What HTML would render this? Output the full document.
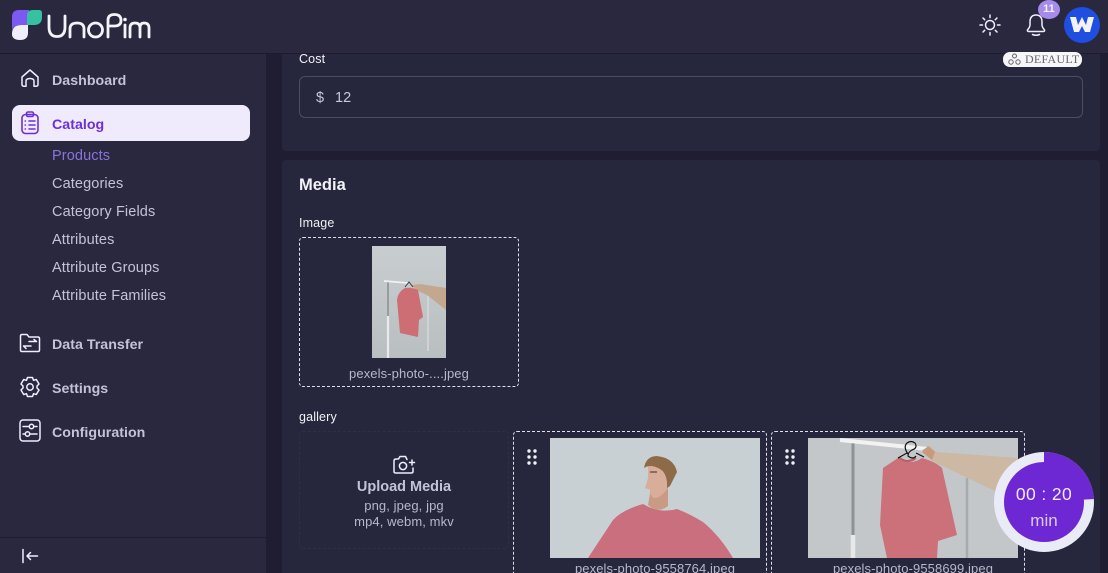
<!DOCTYPE html>
<html><head><meta charset="utf-8"><style>
html,body{margin:0;padding:0;width:1108px;height:573px;overflow:hidden;background:#1e1d32;font-family:"Liberation Sans",sans-serif}
#w{position:relative;width:1108px;height:573px;overflow:hidden;background:#1e1d32}
.a{position:absolute;white-space:nowrap}
.nav{left:52px;font-size:14.2px;font-weight:700;color:#c3c3d8;line-height:20px;letter-spacing:.03px}
.sub{left:52px;font-size:14.5px;color:#c3c3d8;line-height:20px;letter-spacing:.12px}
.lbl{font-size:12.5px;color:#f0f0f5;line-height:16px;letter-spacing:.15px}
.cap{font-size:13px;color:#b8b8cc;text-align:center;line-height:16px;letter-spacing:.1px}
svg{position:absolute;display:block}
.ic{fill:none;stroke:#eef;stroke-width:1.5;stroke-linecap:round;stroke-linejoin:round}
.dash{position:absolute;box-sizing:border-box;border:1px dashed #dfe0ea;border-radius:4px}
</style></head><body><div id="w">
<div class="a" style="left:0;top:54px;width:266px;height:519px;background:#29283f"></div>
<div class="a" style="left:282px;top:44px;width:818px;height:107px;background:#26273c;border-radius:4px"></div>
<div class="a" style="left:282px;top:160px;width:818px;height:413px;background:#26273c;border-radius:4px 4px 0 0"></div>
<div class="a" style="left:0;top:0;width:1108px;height:53px;background:#29283f;border-bottom:1px solid #1c1c2e"></div>

<svg style="left:12px;top:10px" width="30" height="30" viewBox="0 0 30 30"><path d="M0 24Q0 15 9 15H16V23Q16 30 8 30Q0 30 0 24Z" fill="#f1eefc"/><path d="M0 14V7Q0 0 7 0H17V15H9Q2 15 0 20Z" fill="#7a5af0"/><path d="M15 6Q15 0 21 0H27Q30 0 30 3V7Q30 15 22 15H15Z" fill="#36c2a2"/></svg>
<svg style="left:46px;top:12px" width="106" height="28" viewBox="0 0 106 28"><g fill="none" stroke="#f3f3f8" stroke-width="2.800" stroke-linecap="round"><path d="M3 4V15Q3 24.500 11 24.500Q19 24.500 19 15V4"/><path d="M24 25V17Q24 11 31 11Q38 11 38 17V25"/><circle cx="49.500" cy="18" r="7"/><path d="M62 25V8Q62 2.500 68.500 2.500Q75 2.500 75 8.500Q75 14 68.500 14H64"/><path d="M79 13V25"/><path d="M84 25V16Q84 11 89 11Q94 11 94 16V25M94 16Q94 11 98 11Q103 11 103 16V25"/></g><circle cx="79" cy="7.500" r="1.800" fill="#f3f3f8"/></svg>

<svg style="left:979px;top:14px" width="22" height="22" viewBox="0 0 22 22"><g class="ic"><circle cx="11" cy="11" r="4.500"/><path d="M11 1V3.500M11 18.500V21M1 11H3.500M18.500 11H21M4 4L5.700 5.700M16.300 16.300L18 18M4 18L5.700 16.300M16.300 5.700L18 4"/></g></svg>
<svg style="left:1024px;top:12px" width="24" height="26" viewBox="0 0 24 26"><g class="ic"><path d="M12 3Q6 3 6 10V13Q6 15 3.500 18Q3 19.500 5 19.500H19Q21 19.500 20.500 18Q18 15 18 13V10Q18 3 12 3Z"/><path d="M8.500 22.500Q12 24 15.500 22.500"/></g></svg>
<div class="a" style="left:1038px;top:0;width:22px;height:19px;border-radius:50%;background:#a78be8;color:#f3effc;font-size:11px;font-weight:700;text-align:center;line-height:18px">11</div>
<div class="a" style="left:1064px;top:7px;width:36px;height:36px;border-radius:50%;background:#1f4fe0"></div>
<svg style="left:1070px;top:17px" width="24" height="15" viewBox="0 0 24 15"><path d="M0 0H6L8 8L12 0L16 8L18 0H24L20 15H15L12 9L9 15H4Z" fill="#f2f2fa"/></svg>

<svg style="left:21px;top:69px" width="18" height="18" viewBox="0 0 18 18"><path class="ic" d="M1 8L9 1L17 8V15.500Q17 17.200 15 17.200H13V12Q13 9.500 9 9.500Q5 9.500 5 12V17.200H3Q1 17.200 1 15.500Z"/></svg>
<div class="a nav" style="top:71px">Dashboard</div>
<div class="a" style="left:12px;top:105px;width:238px;height:36px;border-radius:8px;background:#efeafc"></div>
<svg style="left:20px;top:111px" width="20" height="24" viewBox="0 0 20 24"><g fill="none" stroke="#6d2fd6" stroke-width="1.600" stroke-linecap="round" stroke-linejoin="round"><rect x="2" y="3.500" width="16" height="19" rx="3.500"/><rect x="6.500" y="1" width="7" height="4.500" rx="1.500"/><path d="M9 10H15M9 14H15M9 18H15M5.200 10H5.400M5.200 14H5.400M5.200 18H5.400"/></g></svg>
<div class="a nav" style="top:115px;color:#6d2fd6">Catalog</div>
<div class="a sub" style="top:146px;color:#8b73dc">Products</div>
<div class="a sub" style="top:174px">Categories</div>
<div class="a sub" style="top:202px">Category Fields</div>
<div class="a sub" style="top:230px">Attributes</div>
<div class="a sub" style="top:258px">Attribute Groups</div>
<div class="a sub" style="top:286px">Attribute Families</div>
<svg style="left:19px;top:333px" width="22" height="20" viewBox="0 0 22 20"><g class="ic"><path d="M1.500 3Q1.500 1.500 3 1.500H8L10 4H19Q20.500 4 20.500 5.500V17Q20.500 18.500 19 18.500H3Q1.500 18.500 1.500 17Z"/><path d="M10 8.500H17.500L15 6.500M12 13H4.500L7 15.500"/></g></svg>
<div class="a nav" style="top:335px">Data Transfer</div>
<svg style="left:19px;top:376px" width="22" height="22" viewBox="0 0 22 22"><g class="ic"><circle cx="11" cy="11" r="3.200"/><path d="M8.500 1.500H13.500L14.500 4.300L17.300 3.500L20 8L18 10V12L20 14L17.300 18.500L14.500 17.700L13.500 20.500H8.500L7.500 17.700L4.700 18.500L2 14L4 12V10L2 8L4.700 3.500L7.500 4.300Z"/></g></svg>
<div class="a nav" style="top:379px">Settings</div>
<svg style="left:19px;top:419px" width="22" height="23" viewBox="0 0 22 23"><g class="ic"><rect x="1" y="1" width="20" height="21" rx="3"/><path d="M4 7.500H10M15 7.500H18M4 15H6M11 15H18"/><circle cx="12.500" cy="7.500" r="2.200"/><circle cx="8.500" cy="15" r="2.200"/></g></svg>
<div class="a nav" style="top:423px">Configuration</div>
<div class="a" style="left:0;top:537px;width:266px;height:1px;background:#1d1d30"></div>
<svg style="left:21px;top:547px" width="18" height="18" viewBox="0 0 18 18"><path class="ic" d="M2 2.500V15.500M16.500 9H6M9.500 5.500L6 9L9.500 12.500"/></svg>

<div class="a lbl" style="left:299px;top:51px">Cost</div>
<div class="a" style="left:1003px;top:52px;width:79px;height:15px;background:#f6f6fa;border-radius:7px"></div>
<svg style="left:1008px;top:53px" width="13" height="13" viewBox="0 0 13 13"><g fill="none" stroke="#666" stroke-width="1"><circle cx="6.500" cy="3" r="2"/><circle cx="3" cy="9" r="2.200"/><circle cx="10" cy="9" r="2.200"/></g></svg>
<div class="a" style="left:1025px;top:52px;font:12px/15px 'Liberation Serif',serif;color:#666;letter-spacing:.25px">DEFAULT</div>
<div class="a" style="left:299px;top:76px;width:784px;height:42px;box-sizing:border-box;border:1px solid #4c4d63;border-radius:6px"></div>
<div class="a" style="left:316px;top:89px;font-size:14.500px;line-height:18px;color:#c8c8da">$</div>
<div class="a" style="left:335px;top:89px;font-size:14.500px;line-height:18px;color:#c8c8da">12</div>

<div class="a" style="left:299px;top:176px;font-size:16.500px;font-weight:700;color:#f2f2f7;line-height:19px">Media</div>
<div class="a lbl" style="left:299px;top:215px">Image</div>
<div class="dash" style="left:299px;top:237px;width:220px;height:150px"></div>
<svg style="left:372px;top:246px" width="74" height="112" viewBox="0 0 74 112"><defs><linearGradient id="g1" x1="0" y1="0" x2="0" y2="1"><stop offset="0" stop-color="#c8cdd0"/><stop offset="1" stop-color="#b9bfc1"/></linearGradient></defs><rect width="74" height="112" fill="url(#g1)"/><path d="M16 35V72" stroke="#9a9c9e" stroke-width="2"/><path d="M16 70V112" stroke="#e9e9e9" stroke-width="2.200"/><path d="M56 50V105" stroke="#d6d8da" stroke-width="1.500"/><path d="M12 35L36 37" stroke="#f1f1f1" stroke-width="1.800"/><path d="M40 39L48 38L74 42V64L55 49L44 44Z" fill="#c3a88f"/><path d="M33 42Q26 46 25 54L28 87L46 91L47 74L51 71L46 44Q40 41 33 42Z" fill="#cc6e73"/><path d="M33 41L37 36L41 41" fill="none" stroke="#333" stroke-width=".9"/></svg>
<div class="a cap" style="left:299px;top:366px;width:220px">pexels-photo-....jpeg</div>

<div class="a lbl" style="left:299px;top:409px">gallery</div>
<div class="a" style="left:299px;top:431px;width:210px;height:118px;box-sizing:border-box;border:1px dashed #2e2f46;border-radius:4px"></div>
<svg style="left:393px;top:455px" width="24" height="20" viewBox="0 0 24 20"><g class="ic" stroke-width="1.300"><path d="M14 4.500L12.500 1.500H7L5.500 4H3Q1 4 1 6V16.500Q1 18 3 18H18Q20 18 20 16.500V13"/><circle cx="10" cy="11" r="3.600"/><path d="M19 5V10M16.500 7.500H21.500"/></g></svg>
<div class="a" style="left:299px;top:478px;width:210px;text-align:center;font-size:14.500px;font-weight:700;line-height:18px;color:#c3c3d8">Upload Media</div>
<div class="a cap" style="left:299px;top:498px;width:210px">png, jpeg, jpg<br>mp4, webm, mkv</div>

<div class="dash" style="left:513px;top:431px;width:254px;height:160px"></div>
<svg style="left:527px;top:449px" width="10" height="16" viewBox="0 0 10 16" fill="#f0f0f5"><circle cx="2" cy="2" r="1.700"/><circle cx="8" cy="2" r="1.700"/><circle cx="2" cy="8" r="1.700"/><circle cx="8" cy="8" r="1.700"/><circle cx="2" cy="14" r="1.700"/><circle cx="8" cy="14" r="1.700"/></svg>
<svg style="left:550px;top:438px" width="210" height="120" viewBox="0 0 210 120"><rect width="210" height="120" fill="#c9d0d4"/><path d="M38 120L63 82Q72 72 93 66Q110 76 127 71Q140 76 153 84Q170 98 183 120Z" fill="#c96f7e"/><path d="M101 50H118L118 68Q108 76 98 67Z" fill="#c99b85"/><path d="M98 24Q106 20 118 26L119 48Q112 60 104 60Q100 58 100 52L95 50L98 40Z" fill="#d8ae9a"/><path d="M94 30Q96 18 107 18Q124 20 127 34L120 48L117 50Q118 34 108 30Q100 26 94 30Z" fill="#8f6a48"/><path d="M100 34H107" stroke="#5c4032" stroke-width="1.200"/></svg>
<div class="a cap" style="left:513px;top:561px;width:284px">pexels-photo-9558764.jpeg</div>

<div class="dash" style="left:771px;top:431px;width:254px;height:160px"></div>
<svg style="left:785px;top:449px" width="10" height="16" viewBox="0 0 10 16" fill="#f0f0f5"><circle cx="2" cy="2" r="1.700"/><circle cx="8" cy="2" r="1.700"/><circle cx="2" cy="8" r="1.700"/><circle cx="8" cy="8" r="1.700"/><circle cx="2" cy="14" r="1.700"/><circle cx="8" cy="14" r="1.700"/></svg>
<svg style="left:808px;top:438px" width="210" height="120" viewBox="0 0 210 120"><rect width="210" height="120" fill="#c3c7c9"/><path d="M45 5V98" stroke="#8f9294" stroke-width="3"/><path d="M45 97V120" stroke="#e8e8e8" stroke-width="4.500"/><path d="M159 40V120" stroke="#a8abad" stroke-width="2.500"/><path d="M32 2L120 11" stroke="#f2f2f2" stroke-width="4"/><path d="M114 12L122 8L128 14L210 20V58L187 53L124 23Z" fill="#cdb8a4"/><path d="M114 14L120 8L127 14L124 22Z" fill="#c79a7c"/><path d="M90 20Q102 28 114 20Q128 24 134 30L149 97L130 103L129 120H79L72 87L75 30Z" fill="#cc7079"/><path d="M90 20H92Q99 26 108 20" fill="none" stroke="#bb5c66" stroke-width="2"/><path d="M100 16Q95 9 99 5Q103 2 107 5Q110 10 104 12Q100 14 100 18Q105 22 108 18" fill="none" stroke="#111" stroke-width="1.200"/><path d="M90 20L99 15M108 15L116 19" stroke="#111" stroke-width="1.200"/></svg>
<div class="a cap" style="left:771px;top:561px;width:284px">pexels-photo-9558699.jpeg</div>

<div class="a" style="left:1100px;top:54px;width:8px;height:519px;background:#1e1d32"></div>

<svg style="left:994px;top:452px" width="100" height="100" viewBox="0 0 100 100"><circle cx="50" cy="50" r="50" fill="#e9ebf7"/><path d="M50 50V0A50 50 0 0 1 100 47Z" fill="#6d28d4"/><circle cx="50" cy="50" r="40" fill="#6d28d4"/></svg>
<div class="a" style="left:994px;top:483px;width:100px;text-align:center;font-size:17.500px;line-height:22px;color:#f0eafc;letter-spacing:.4px">00 : 20</div>
<div class="a" style="left:994px;top:510px;width:100px;text-align:center;font-size:17px;line-height:22px;color:#d9cdf5">min</div>
</div></body></html>
